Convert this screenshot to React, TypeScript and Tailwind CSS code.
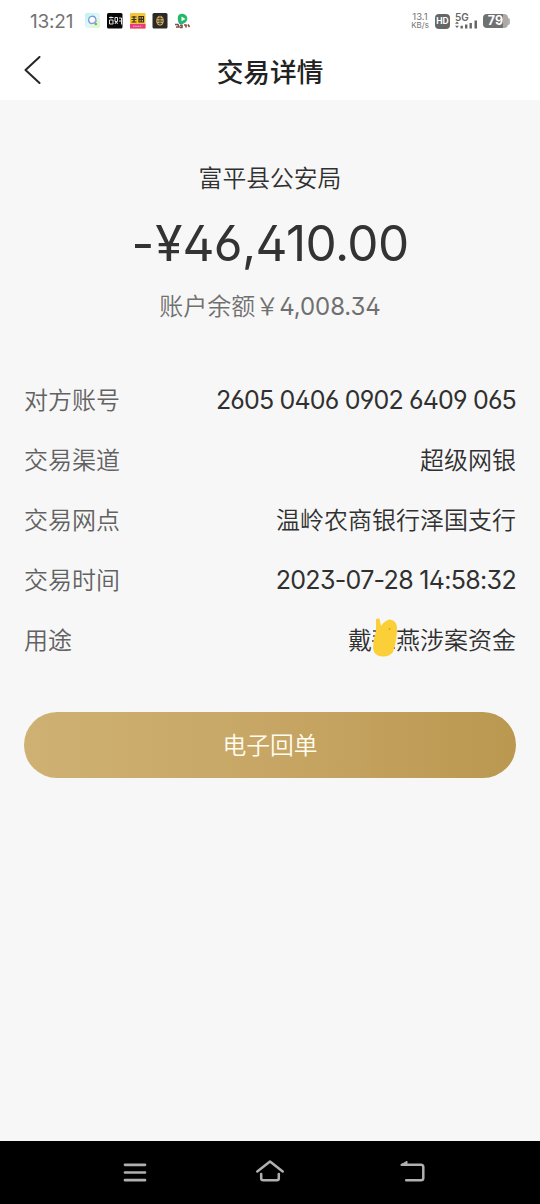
import type { ReactNode } from 'react';

function StatusBar() {
  return (
    <div className="flex h-[42px] items-center justify-between pl-[30px] pr-[30px] text-[#737373]">
      <div className="flex items-center">
        <span className="w-[55px] text-[19px] leading-none tracking-[-0.2px]">13:21</span>
        <svg width="106" height="16" viewBox="0 0 106 16">
          <defs>
            <linearGradient id="pastel" x1="0" y1="0" x2="1" y2="1">
              <stop offset="0" stopColor="#b8f3ef" />
              <stop offset="0.5" stopColor="#e3f6fb" />
              <stop offset="1" stopColor="#e2f5b5" />
            </linearGradient>
          </defs>
          <rect width="15" height="15" rx="2" fill="url(#pastel)" />
          <path d="M3.7 7a3.6 3.6 0 1 1 5 3.2L6 10.5A3.6 3.6 0 0 1 3.7 7Z" fill="#fff" stroke="#759ddc" strokeWidth="1.3" />
          <path d="M8.5 10.3 11.2 8" stroke="#c78ce0" strokeWidth="1.3" />
          <circle cx="10.8" cy="11" r="1.3" fill="#47c96d" />
          <rect x="22" width="15.500" height="15.500" rx="1.500" fill="#090909" />
          <path d="M24 4.500h4.500M24.500 7h3.500v4h-3.500zM26 3.500v2M30 4.500h2.500v4h-2.500zM30 11l1-2M32.500 11l-1-2M34 5h2.500v6.500M34 8h2.500" fill="none" stroke="#e3e3e3" strokeWidth="1" />
          <rect x="45" width="15.500" height="15.500" rx="1" fill="#f5c637" />
          <path d="M46.500 4h5M49 3v6.500M46.500 6.500h5M46.500 9h5M54 3.500h4.500v5.500h-4.500zM54 6.300h4.500M56.200 3.500v5.500" fill="none" stroke="#382c17" strokeWidth="1.200" />
          <rect x="45" y="11" width="15.500" height="4.500" fill="#e73c83" />
          <path d="M48 13.300h9" stroke="#f79bb9" strokeWidth="1.300" strokeDasharray="1.500 0.700" />
          <rect x="67.500" width="15" height="15.500" rx="1.500" fill="#2b2a26" />
          <ellipse cx="75" cy="7.700" rx="3.800" ry="5" fill="#c9a765" />
          <path d="M75 3v9M72.500 5.500h5M72 8h6M73 10.500h4" stroke="#40331e" strokeWidth="0.800" />
          <path d="M93 3.500c1-4.500 9.500-3 9.300 2.500-.2 3.500-4 5-6.800 4.500-2.500-.5-3.100-4.500-2.500-7Z" fill="#24ba63" />
          <path d="M93.500 8c1 2.500 4.500 3 7 1.500l-4 2.200c-2 0-3.200-2-3-3.700Z" fill="#1698cf" />
          <path d="m96.500 3.500 4 2.500-4 2.300Z" fill="#fff" />
          <path d="M90 11.500h3l1 2.500h-3M95 12.500h2v2h-2M99 12h2v2.500M103 11.500l1.500 2.500" fill="none" stroke="#84513f" strokeWidth="1.600" />
        </svg>
      </div>
      <div className="flex items-center">
        <div className="mr-[5px] flex w-[20px] flex-col items-center text-[9.500px] leading-[8.500px]">
          <span>13.1</span>
          <span className="text-[8px]">KB/s</span>
        </div>
        <div className="mr-[5px] flex h-[15px] w-[15px] items-center justify-center rounded-[4px] bg-[#666] text-[8.500px] font-bold text-white">HD</div>
        <div className="mr-[5px] flex w-[23px] flex-col">
          <span className="text-[10px] font-semibold leading-[8px] text-[#666]">5G</span>
          <svg className="-mt-[1px]" width="23" height="9" viewBox="0 0 23 9">
            <path d="M0 3.800 2 1.500l2 2.300zM0 5.700 2 8l2-2.300zM5.500 5.800h2.400v2.700H5.500zM10 4.500h2.400v4H10zM14.500 3h2.400v5.500h-2.400zM19.500 0.500H22v8h-2.500z" fill="#666" />
          </svg>
        </div>
        <div className="flex h-[14px] w-[25px] items-center justify-center rounded-[4px] bg-linear-to-r from-[#707070] from-80% to-[#aaa] to-80% text-[12.500px] font-bold leading-none text-white">79</div>
        <div className="h-[7px] w-[2px] rounded-r-full bg-[#b3b3b3]" />
      </div>
    </div>
  );
}

function Header() {
  return (
    <div className="grid h-[58px] grid-cols-[1fr_auto_1fr] items-center px-6">
      <svg width="17" height="28" viewBox="0 0 17 28" fill="none" stroke="#262626" strokeWidth="2" strokeLinecap="round" strokeLinejoin="round" className="-mt-[2px]">
        <path d="M15.500 1 1.500 14 15.500 27" />
      </svg>
      <h1 className="pt-[2px] text-[26.700px] font-medium leading-none text-[#222]">交易详情</h1>
    </div>
  );
}

function Row({ label, children }: { label: string; children: ReactNode }) {
  return (
    <div className="flex h-[60px] items-center justify-between whitespace-nowrap pt-[2px] text-[24px] leading-none">
      <span className="text-[#626262]">{label}</span>
      <span className="text-[#303030]">{children}</span>
    </div>
  );
}

function MarkedCharacter() {
  return (
    <span className="relative inline-block h-[18px] w-6">
      <svg className="absolute -top-[14px] left-0" width="28" height="42" viewBox="0 0 28 42">
        <path d="M1 14h6M1 19h6M0 24h7M19 31h4" stroke="#444" strokeWidth="1.500" />
        <path d="M4 3Q4 1 6 1.500Q8 1 8 4L9 9Q13 3 18 2.500Q24 3 25 10C25 18 24 27 21 35Q17 40 10 39.500Q2 39 1 31Q1 23 4 14Z" fill="#fbcf38" />
        <circle cx="17.500" cy="12" r="0.800" fill="#b88b20" />
      </svg>
    </span>
  );
}

function NavigationBar() {
  return (
    <div className="flex h-[63px] items-center justify-between bg-black px-[121px]">
      <svg width="28" height="28" viewBox="0 0 28 28" fill="none" stroke="#b0b0b0" strokeWidth="2.700" strokeLinecap="round">
        <path d="M4 5.800h20M4 13.500h20M4 21.200h20" />
      </svg>
      <svg className="-ml-2" width="30" height="28" viewBox="0 0 30 28" fill="none" stroke="#b0b0b0" strokeWidth="2.500" strokeLinecap="round" strokeLinejoin="round">
        <path d="M2.300 12.500 15 2.500l12.700 10M6.200 15v4.200q0 2 2 2h13.600q2 0 2-2v-4.200" />
      </svg>
      <svg className="-mr-[8px]" width="28" height="28" viewBox="0 0 28 28" fill="none" stroke="#b0b0b0" strokeWidth="2.500" strokeLinecap="round" strokeLinejoin="round">
        <path d="M3 5.800h19q2.300 0 2.300 2.300v10.800q0 2.300-2.300 2.300H7.200" />
        <path d="M2 5.800 8 2.200v3.600Z" fill="#b0b0b0" stroke="#b0b0b0" strokeWidth="1" />
      </svg>
    </div>
  );
}

export default function App() {
  return (
    <div className="flex h-[1204px] w-[540px] flex-col overflow-hidden bg-white font-['Inter','Noto_Sans_CJK_SC',sans-serif]">
      <StatusBar />
      <Header />
      <main className="flex flex-1 flex-col bg-[#f7f7f7] px-6 pt-[60px] font-[350]">
        <div className="flex flex-col items-center">
          <p className="h-[34px] pt-[2px] text-[23.800px] leading-[34px] text-[#303030]">富平县公安局</p>
          <p className="mt-[14px] flex h-[70px] whitespace-nowrap text-[49.500px] font-normal leading-[70px] text-[#333] [font-feature-settings:'ss01']">
            <span className="mr-px">-</span>
            <span>¥</span>
            <span className="tracking-[-0.600px]">46,410.00</span>
          </p>
          <p className="mt-[12px] flex h-[34px] items-center text-[24px] leading-[34px] text-[#707070]">
            <span>账户余额￥</span>
            <span className="font-normal tracking-[-0.100px] [font-feature-settings:'ss01']">4,008.34</span>
          </p>
        </div>
        <div className="mt-[46px]">
          <Row label="对方账号"><span className="block pb-[2px] text-[25px] font-normal tracking-[-0.820px] [font-feature-settings:'ss01']">2605 0406 0902 6409 065</span></Row>
          <Row label="交易渠道">超级网银</Row>
          <Row label="交易网点">温岭农商银行泽国支行</Row>
          <Row label="交易时间"><span className="block pb-[2px] text-[25px] font-normal tracking-[-0.680px] [font-feature-settings:'ss01']">2023-07-28 14:58:32</span></Row>
          <Row label="用途">戴<MarkedCharacter />燕涉案资金</Row>
        </div>
        <button className="mt-[41.500px] h-[66px] rounded-full bg-linear-to-r from-[#ceb173] via-[#c7a665] to-[#bb9850] pt-[2px] text-[23.800px] text-[#fffdf0]">电子回单</button>
      </main>
      <NavigationBar />
    </div>
  );
}
